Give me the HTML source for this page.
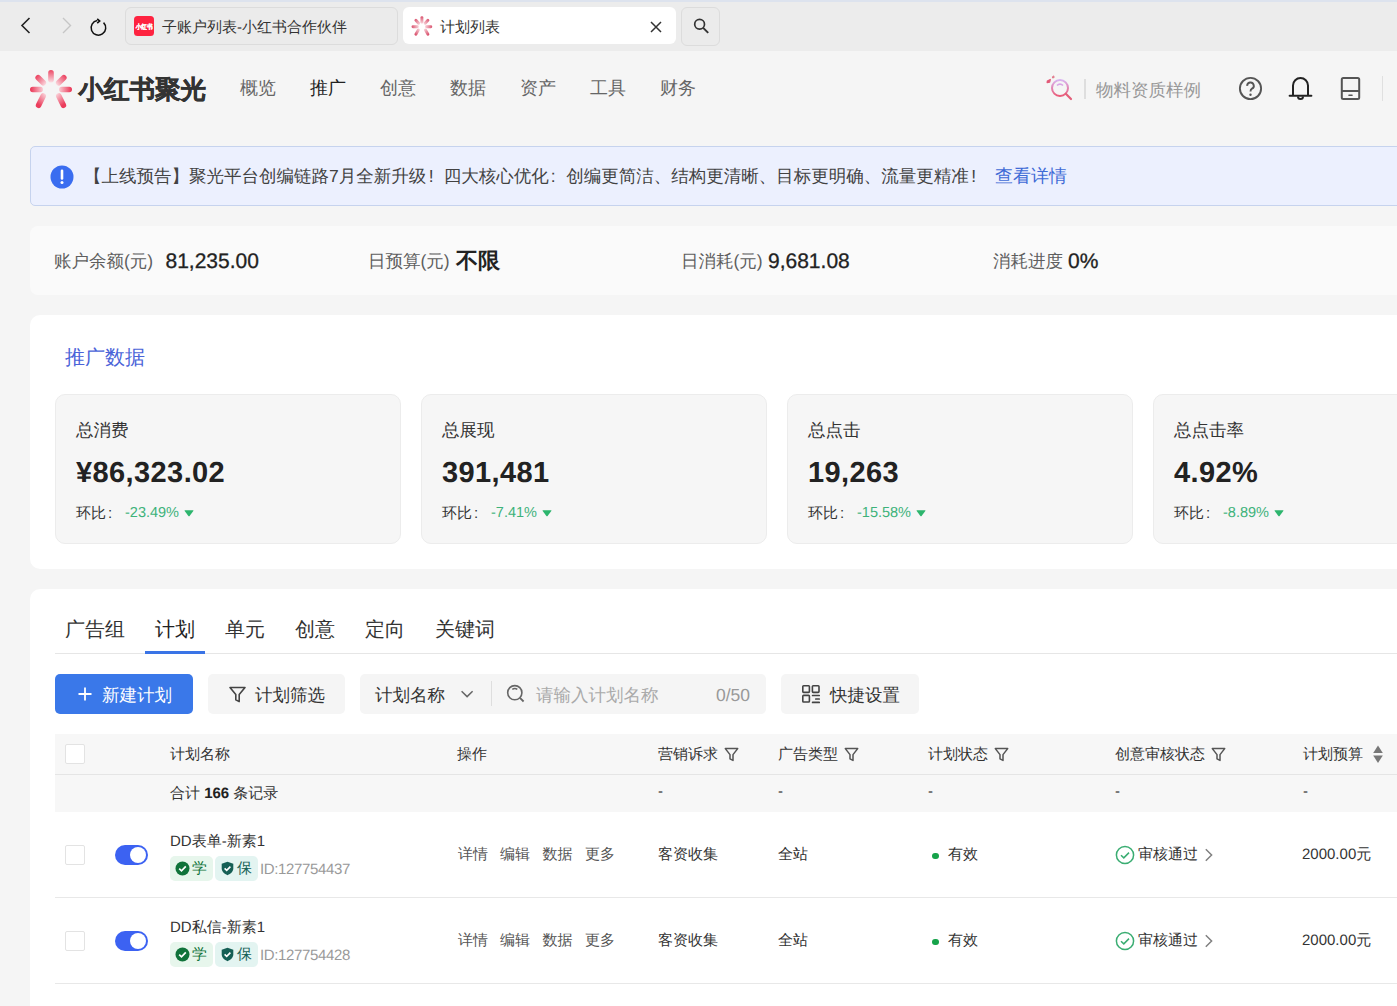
<!DOCTYPE html>
<html><head><meta charset="utf-8">
<style>
*{box-sizing:border-box;margin:0;padding:0}
html,body{width:1397px;height:1006px;overflow:hidden;background:#f5f5f5;font-family:"Liberation Sans",sans-serif;color:#333;text-rendering:geometricPrecision}
.a{position:absolute;white-space:nowrap}
#chrome{position:absolute;left:0;top:0;width:1397px;height:51px;background:#ececec;box-shadow:inset 0 2px 0 #dde3ee}
.tab{position:absolute;top:6.5px;height:38px;border-radius:6px}
.t15{font-size:15px;line-height:20px}
.t175{font-size:17.5px;line-height:24px}
.card{position:absolute;left:30px;width:1400px;background:#fff;border-radius:10px}
.kpi{position:absolute;top:79px;width:346px;height:150px;background:#f6f6f6;border:1px solid #ececec;border-radius:10px}
.kpi .l{position:absolute;left:20px;top:23px;font-size:17.5px;line-height:24px;color:#333}
.kpi .v{position:absolute;left:20px;top:60px;font-size:29px;line-height:36px;font-weight:bold;color:#222;letter-spacing:0.4px}
.kpi .h{position:absolute;left:20px;top:109px;font-size:15px;line-height:20px;color:#333}
.kpi .p{position:absolute;left:69px;top:108px;font-size:14.5px;line-height:20px;color:#3db27a}
.tri{display:inline-block;width:10px;height:8px;margin-left:5px;vertical-align:0px}
.btn{position:absolute;top:674px;height:40px;border-radius:5px;background:#f5f5f5}
.th{position:absolute;top:745px;font-size:15px;line-height:20px;color:#333}
.cb{position:absolute;width:20px;height:20px;border:1px solid #e3e3e3;border-radius:2px;background:#fff}
.row{font-size:15px;line-height:20px;color:#333}
</style></head><body>
<!-- browser chrome -->
<div id="chrome">
  <svg class="a" style="left:18px;top:16px" width="16" height="19" viewBox="0 0 16 19"><path d="M11.5 2 L4 9.5 L11.5 17" fill="none" stroke="#222" stroke-width="1.6"/></svg>
  <svg class="a" style="left:59px;top:16px" width="16" height="19" viewBox="0 0 16 19"><path d="M4 2 L11.5 9.5 L4 17" fill="none" stroke="#c6c6c6" stroke-width="1.4"/></svg>
  <svg class="a" style="left:89px;top:18px" width="19" height="19" viewBox="0 0 19 19"><path d="M14.56 4.64 A7.3 7.3 0 1 1 8.3 2.6" fill="none" stroke="#111" stroke-width="1.5"/><path d="M8.2 0.9 L10.7 3.1 L8.2 5.2" fill="none" stroke="#111" stroke-width="1.6"/></svg>
  <div class="tab" style="left:125px;width:273px;background:#ebebeb;border:1px solid #dcdcdc"></div>
  <svg class="a" style="left:134px;top:16px" width="20" height="20" viewBox="0 0 20 20"><rect x="0" y="0" width="20" height="20" rx="3.5" fill="#fe2340"/><text x="1.7" y="12.6" font-size="6.6" font-weight="bold" fill="#fff" stroke="#fff" stroke-width="0.25" textLength="17" lengthAdjust="spacingAndGlyphs">小红书</text></svg>
  <div class="a t15" style="left:162px;top:18px;color:#333">子账户列表-小红书合作伙伴</div>
  <div class="tab" style="left:403px;width:273px;background:#fff;top:7px;height:37px"></div>
  <svg class="a" style="left:411px;top:15px" width="22" height="22" viewBox="0 0 22 22">
    <defs><radialGradient id="sg" gradientUnits="userSpaceOnUse" cx="10.9" cy="11.7" r="10.5"><stop offset="0.25" stop-color="#fbe0e5"/><stop offset="1" stop-color="#d9506c"/></radialGradient></defs>
    <g stroke-linecap="round" stroke-width="2.9" stroke="url(#sg)">
      <line x1="10.9" y1="2.6" x2="10.9" y2="7.3"/>
      <line x1="4.9" y1="5.3" x2="7.6" y2="8.3"/>
      <line x1="16.9" y1="5.3" x2="14.2" y2="8.3"/>
      <line x1="2" y1="11.7" x2="6.4" y2="11.7"/>
      <line x1="15.4" y1="11.7" x2="19.8" y2="11.7"/>
      <line x1="7.4" y1="14.9" x2="4.9" y2="19.3"/>
      <line x1="14.4" y1="14.9" x2="16.9" y2="19.3"/>
    </g>
  </svg>
  <div class="a t15" style="left:440px;top:18px;color:#333">计划列表</div>
  <svg class="a" style="left:649px;top:20px" width="14" height="14" viewBox="0 0 14 14"><path d="M2 2 L12 12 M12 2 L2 12" stroke="#333" stroke-width="1.5"/></svg>
  <div class="tab" style="left:681px;width:39px;background:#ebebeb;border:1px solid #dcdcdc;top:6.5px;height:39px"></div>
  <svg class="a" style="left:691px;top:16px" width="20" height="20" viewBox="0 0 20 20"><circle cx="8.6" cy="8.3" r="4.9" fill="none" stroke="#333" stroke-width="1.7"/><path d="M12.2 11.9 L17.2 16.9" stroke="#333" stroke-width="2"/></svg>
</div>

<!-- header -->
<svg class="a" style="left:28px;top:68px" width="46" height="44" viewBox="0 0 46 44">
  <defs>
    <radialGradient id="gr" gradientUnits="userSpaceOnUse" cx="23" cy="21" r="20"><stop offset="0.3" stop-color="#fce6ea"/><stop offset="1" stop-color="#eb3d5c"/></radialGradient>
  </defs>
  <g stroke="url(#gr)" stroke-width="5.6" stroke-linecap="round">
    <line x1="23" y1="4.8" x2="23" y2="11.8"/>
    <line x1="10.2" y1="9.8" x2="15.3" y2="14.8"/>
    <line x1="35.8" y1="9.8" x2="30.7" y2="14.8"/>
    <line x1="4.8" y1="21.5" x2="12.2" y2="21.5"/>
    <line x1="33.8" y1="21.5" x2="41.2" y2="21.5"/>
    <line x1="15.2" y1="28" x2="10.6" y2="37.3"/>
    <line x1="30.8" y1="28" x2="35.4" y2="37.3"/>
  </g>
</svg>
<div class="a" style="left:78.5px;top:74px;font-size:25.5px;line-height:32px;font-weight:bold;color:#333;letter-spacing:0px;-webkit-text-stroke:0.45px #333">小红书聚光</div>
<div class="a t175" style="left:240px;top:76px;color:#666;font-size:18px">概览</div>
<div class="a t175" style="left:310px;top:76px;color:#222;font-size:18px">推广</div>
<div class="a t175" style="left:380px;top:76px;color:#666;font-size:18px">创意</div>
<div class="a t175" style="left:450px;top:76px;color:#666;font-size:18px">数据</div>
<div class="a t175" style="left:520px;top:76px;color:#666;font-size:18px">资产</div>
<div class="a t175" style="left:590px;top:76px;color:#666;font-size:18px">工具</div>
<div class="a t175" style="left:660px;top:76px;color:#666;font-size:18px">财务</div>

<svg class="a" style="left:1045px;top:74px" width="30" height="28" viewBox="0 0 30 28">
  <defs><linearGradient id="mg" x1="0" y1="0" x2="0" y2="1"><stop offset="0" stop-color="#d9b3f0"/><stop offset="1" stop-color="#ea5b78"/></linearGradient></defs>
  <circle cx="15" cy="14" r="8" fill="none" stroke="url(#mg)" stroke-width="2"/>
  <path d="M12 11.5 A4 4 0 0 1 18 11.5" fill="none" stroke="#d9a7e6" stroke-width="1.6"/>
  <path d="M20.8 19.8 L26 25" stroke="#e35f7a" stroke-width="2.2" stroke-linecap="round"/>
  <path d="M2.3 7.1 l3 -1.6 l-0.6 2.6 l-2.6 0.6z" fill="#e25a78" stroke="#e25a78" stroke-width="1.2" stroke-linejoin="round"/>
  <path d="M7.4 2.8 l1.4 -0.9 l0.3 1.7 l-1.6 0.4z" fill="#e27a8c" stroke="#e27a8c" stroke-width="1"/>
</svg>
<div class="a" style="left:1084px;top:79px;width:2px;height:20px;background:#dedede"></div>
<div class="a t175" style="left:1096px;top:78px;color:#999">物料资质样例</div>
<svg class="a" style="left:1237px;top:75px" width="27" height="27" viewBox="0 0 27 27">
  <circle cx="13.5" cy="13.5" r="10.6" fill="none" stroke="#555" stroke-width="1.9"/>
  <path d="M10.2 10.9 A3.3 3.3 0 1 1 15 13.7 C13.9 14.3 13.5 15 13.5 16.4" fill="none" stroke="#555" stroke-width="1.9"/>
  <circle cx="13.5" cy="19.8" r="1.2" fill="#555"/>
</svg>
<svg class="a" style="left:1287px;top:75px" width="27" height="27" viewBox="0 0 27 27">
  <path d="M6 20.5 V10.5 A7.5 7.5 0 0 1 21 10.5 V20.5" fill="none" stroke="#222" stroke-width="2"/>
  <path d="M2.6 20.8 H24.4" stroke="#222" stroke-width="2" stroke-linecap="round"/>
  <path d="M11 21.6 A2.5 2.5 0 0 0 16 21.6" fill="none" stroke="#222" stroke-width="2"/>
</svg>
<svg class="a" style="left:1338px;top:75px" width="25" height="27" viewBox="0 0 25 27">
  <rect x="3.8" y="3" width="17.4" height="21" rx="1.5" fill="none" stroke="#555" stroke-width="2"/>
  <path d="M3.8 16 H21.2" stroke="#555" stroke-width="2"/>
  <path d="M11 20.2 H14" stroke="#555" stroke-width="1.6" stroke-linecap="round"/>
</svg>
<div class="a" style="left:1382px;top:76px;width:1px;height:25px;background:#e0e0e0"></div>

<!-- banner -->
<div class="a" style="left:30px;top:146px;width:1400px;height:60px;background:#ecf0fe;border:1px solid #c6d3ee;border-radius:5px"></div>
<svg class="a" style="left:50px;top:165px" width="24" height="24" viewBox="0 0 24 24"><circle cx="12" cy="12" r="11.5" fill="#3a6df0"/><path d="M12 5.8 V13.5" stroke="#fff" stroke-width="2.6" stroke-linecap="round"/><circle cx="12" cy="17.6" r="1.5" fill="#fff"/></svg>
<div class="a t175" style="left:84px;top:164px;color:#424242">【上线预告】聚光平台创编链路7月全新升级<span style="display:inline-block;width:17.5px;padding-left:2.5px">!</span>四大核心优化<span style="display:inline-block;width:17.5px;padding-left:2px">:</span>创编更简洁、结构更清晰、目标更明确、流量更精准<span style="display:inline-block;width:17.5px;padding-left:2.5px">!</span></div>
<div class="a t175" style="left:995px;top:164px;color:#3f6bd6;font-size:18px">查看详情</div>

<!-- stats -->
<div class="a" style="left:30px;top:226px;width:1400px;height:69px;background:#fafafa;border-radius:8px"></div>
<div class="a t175" style="left:54px;top:249px;color:#5e5e5e">账户余额(元)</div>
<div class="a" style="left:165.5px;top:248.5px;font-size:21px;line-height:26px;color:#222;-webkit-text-stroke:0.3px #222">81,235.00</div>
<div class="a t175" style="left:368px;top:249px;color:#5e5e5e">日预算(元)</div>
<div class="a" style="left:456px;top:247px;font-size:22px;line-height:28px;color:#222;font-weight:bold">不限</div>
<div class="a t175" style="left:681px;top:249px;color:#5e5e5e">日消耗(元)</div>
<div class="a" style="left:768px;top:248.5px;font-size:21px;line-height:26px;color:#222;-webkit-text-stroke:0.3px #222">9,681.08</div>
<div class="a t175" style="left:993px;top:249px;color:#5e5e5e">消耗进度</div>
<div class="a" style="left:1068px;top:248.5px;font-size:21px;line-height:26px;color:#222;-webkit-text-stroke:0.3px #222">0%</div>

<!-- promo card -->
<div class="card" style="top:315px;height:254px">
  <div class="a" style="left:35px;top:30px;font-size:20px;line-height:26px;color:#4a63d8">推广数据</div>
  <div class="kpi" style="left:25px"><div class="l">总消费</div><div class="v">¥86,323.02</div><div class="h">环比<span style="display:inline-block;width:15px;padding-left:2px">:</span></div><div class="p">-23.49%<svg class="tri" viewBox="0 0 10 8"><path d="M1 1.2 H9 Q9.8 1.2 9.3 2 L5.6 6.9 Q5 7.6 4.4 6.9 L0.7 2 Q0.2 1.2 1 1.2Z" fill="#2db56d"/></svg></div></div>
  <div class="kpi" style="left:391px"><div class="l">总展现</div><div class="v">391,481</div><div class="h">环比<span style="display:inline-block;width:15px;padding-left:2px">:</span></div><div class="p">-7.41%<svg class="tri" viewBox="0 0 10 8"><path d="M1 1.2 H9 Q9.8 1.2 9.3 2 L5.6 6.9 Q5 7.6 4.4 6.9 L0.7 2 Q0.2 1.2 1 1.2Z" fill="#2db56d"/></svg></div></div>
  <div class="kpi" style="left:757px"><div class="l">总点击</div><div class="v">19,263</div><div class="h">环比<span style="display:inline-block;width:15px;padding-left:2px">:</span></div><div class="p">-15.58%<svg class="tri" viewBox="0 0 10 8"><path d="M1 1.2 H9 Q9.8 1.2 9.3 2 L5.6 6.9 Q5 7.6 4.4 6.9 L0.7 2 Q0.2 1.2 1 1.2Z" fill="#2db56d"/></svg></div></div>
  <div class="kpi" style="left:1123px"><div class="l">总点击率</div><div class="v">4.92%</div><div class="h">环比<span style="display:inline-block;width:15px;padding-left:2px">:</span></div><div class="p">-8.89%<svg class="tri" viewBox="0 0 10 8"><path d="M1 1.2 H9 Q9.8 1.2 9.3 2 L5.6 6.9 Q5 7.6 4.4 6.9 L0.7 2 Q0.2 1.2 1 1.2Z" fill="#2db56d"/></svg></div></div>
</div>

<!-- table card -->
<div class="card" style="top:589px;height:500px"></div>
<div class="a" style="left:65px;top:617px;font-size:20px;line-height:26px;color:#333">广告组</div>
<div class="a" style="left:155px;top:617px;font-size:20px;line-height:26px;color:#222">计划</div>
<div class="a" style="left:225px;top:617px;font-size:20px;line-height:26px;color:#333">单元</div>
<div class="a" style="left:295px;top:617px;font-size:20px;line-height:26px;color:#333">创意</div>
<div class="a" style="left:365px;top:617px;font-size:20px;line-height:26px;color:#333">定向</div>
<div class="a" style="left:435px;top:617px;font-size:20px;line-height:26px;color:#333">关键词</div>
<div class="a" style="left:55px;top:653px;width:1360px;height:1px;background:#e6e6e6"></div>
<div class="a" style="left:145px;top:651px;width:60px;height:3px;background:#3a74e6"></div>

<div class="btn" style="left:55px;width:138px;background:#3a78e9"></div>
<svg class="a" style="left:76.7px;top:686px" width="16" height="16" viewBox="0 0 16 16"><path d="M8 1.5 V14.5 M1.5 8 H14.5" stroke="#fff" stroke-width="1.8"/></svg>
<div class="a t175" style="left:102px;top:683px;color:#fff">新建计划</div>

<div class="btn" style="left:208px;width:137px"></div>
<svg class="a" style="left:228px;top:685px" width="19" height="19" viewBox="0 0 19 19"><path d="M2 2.5 H17 L11.2 9.6 V16.6 L7.8 14.8 V9.6 Z" fill="none" stroke="#444" stroke-width="1.6" stroke-linejoin="round"/></svg>
<div class="a t175" style="left:255px;top:683px;color:#333">计划筛选</div>

<div class="btn" style="left:360px;width:406px"></div>
<div class="a t175" style="left:375px;top:683px;color:#333">计划名称</div>
<svg class="a" style="left:459px;top:687px" width="16" height="13" viewBox="0 0 16 13"><path d="M2.6 4.2 L8.1 9.6 L13.6 4.2" fill="none" stroke="#666" stroke-width="1.5"/></svg>
<div class="a" style="left:491px;top:681px;width:1px;height:25px;background:#dedede"></div>
<svg class="a" style="left:505px;top:683px" width="21" height="21" viewBox="0 0 21 21"><circle cx="9.8" cy="9.7" r="7.1" fill="none" stroke="#666" stroke-width="1.6"/><path d="M7.3 6.4 Q9.8 4.4 12.3 6.4" fill="none" stroke="#666" stroke-width="1.5"/><path d="M14.9 14.8 L18.6 18.5" stroke="#666" stroke-width="1.8"/></svg>
<div class="a t175" style="left:536px;top:683px;color:#aaa">请输入计划名称</div>
<div class="a t175" style="left:716px;top:683px;color:#999">0/50</div>

<div class="btn" style="left:781px;width:138px"></div>
<svg class="a" style="left:801px;top:684px" width="20" height="20" viewBox="0 0 20 20"><rect x="1.8" y="1.8" width="6.6" height="6.6" rx="0.8" fill="none" stroke="#444" stroke-width="1.6"/><rect x="11.4" y="1.8" width="6.6" height="6.6" rx="0.8" fill="none" stroke="#444" stroke-width="1.6"/><rect x="1.8" y="11.4" width="6.6" height="6.6" rx="0.8" fill="none" stroke="#444" stroke-width="1.6"/><path d="M11.6 11.5 H18.2 M14.8 15 H18.2 M11.6 18.4 H18.2" stroke="#444" stroke-width="1.7" stroke-linecap="round"/></svg>
<div class="a t175" style="left:830px;top:683px;color:#333">快捷设置</div>

<!-- table -->
<div class="a" style="left:55px;top:734px;width:1360px;height:78px;background:#f7f7f7"></div>
<div class="a" style="left:55px;top:774px;width:1360px;height:1px;background:#e5e5e5"></div>
<div class="cb" style="left:65px;top:744px"></div>
<div class="th" style="left:170px">计划名称</div>
<div class="th" style="left:457px">操作</div>
<div class="th" style="left:658px">营销诉求</div><svg class="a" style="left:724px;top:747px" width="15" height="15" viewBox="0 0 15 15"><path d="M1.3 1.6 H13.7 L9 7.6 V13.4 L6 11.8 V7.6 Z" fill="none" stroke="#555" stroke-width="1.5" stroke-linejoin="round"/></svg>
<div class="th" style="left:778px">广告类型</div><svg class="a" style="left:844px;top:747px" width="15" height="15" viewBox="0 0 15 15"><path d="M1.3 1.6 H13.7 L9 7.6 V13.4 L6 11.8 V7.6 Z" fill="none" stroke="#555" stroke-width="1.5" stroke-linejoin="round"/></svg>
<div class="th" style="left:928px">计划状态</div><svg class="a" style="left:994px;top:747px" width="15" height="15" viewBox="0 0 15 15"><path d="M1.3 1.6 H13.7 L9 7.6 V13.4 L6 11.8 V7.6 Z" fill="none" stroke="#555" stroke-width="1.5" stroke-linejoin="round"/></svg>
<div class="th" style="left:1115px">创意审核状态</div><svg class="a" style="left:1211px;top:747px" width="15" height="15" viewBox="0 0 15 15"><path d="M1.3 1.6 H13.7 L9 7.6 V13.4 L6 11.8 V7.6 Z" fill="none" stroke="#555" stroke-width="1.5" stroke-linejoin="round"/></svg>
<div class="th" style="left:1303px">计划预算</div>
<svg class="a" style="left:1372px;top:744px" width="12" height="20" viewBox="0 0 12 20"><path d="M6 1.6 L10.8 9 H1.2 Z" fill="#777"/><path d="M6 19 L10.8 11.6 H1.2 Z" fill="#777"/></svg>
<div class="a row" style="left:170px;top:784px">合计 <b style="color:#222">166</b> 条记录</div>
<div class="a row" style="left:658px;top:782px">-</div>
<div class="a row" style="left:778px;top:782px">-</div>
<div class="a row" style="left:928px;top:782px">-</div>
<div class="a row" style="left:1115px;top:782px">-</div>
<div class="a row" style="left:1303px;top:782px">-</div>

<div class="cb" style="left:65px;top:845px"></div>
<div class="a" style="left:115px;top:845px;width:33px;height:20px;border-radius:10px;background:#3c62f2"></div>
<div class="a" style="left:129.5px;top:847px;width:16px;height:16px;border-radius:8px;background:#fff"></div>
<div class="a row" style="left:170px;top:832px;color:#333">DD表单-新素1</div>
<div class="a" style="left:170px;top:856px;width:43px;height:25px;border-radius:5px;background:#e7f6ec"></div>
<svg class="a" style="left:175px;top:861px" width="15" height="15" viewBox="0 0 15 15"><circle cx="7.5" cy="7.5" r="7" fill="#10733a"/><path d="M4.2 7.6 L6.5 9.8 L10.8 5.4" fill="none" stroke="#fff" stroke-width="1.7"/></svg>
<div class="a row" style="left:192px;top:859px;color:#10733a">学</div>
<div class="a" style="left:215px;top:856px;width:43px;height:25px;border-radius:5px;background:#e3f4f1"></div>
<svg class="a" style="left:220px;top:861px" width="15" height="15" viewBox="0 0 15 15"><path d="M7.5 0.8 L13.3 2.8 V7.3 C13.3 10.6 10.8 12.9 7.5 14.2 C4.2 12.9 1.7 10.6 1.7 7.3 V2.8 Z" fill="#155f55"/><path d="M4.6 7.4 L6.7 9.4 L10.4 5.6" fill="none" stroke="#fff" stroke-width="1.6"/></svg>
<div class="a row" style="left:237px;top:859px;color:#155f55">保</div>
<div class="a row" style="left:260px;top:860px;color:#999;letter-spacing:-0.35px">ID:127754437</div>
<div class="a row" style="left:458px;top:845px;color:#555;word-spacing:0">详情</div>
<div class="a row" style="left:500px;top:845px;color:#555">编辑</div>
<div class="a row" style="left:542.5px;top:845px;color:#555">数据</div>
<div class="a row" style="left:585px;top:845px;color:#555">更多</div>
<div class="a row" style="left:658px;top:845px;color:#333">客资收集</div>
<div class="a row" style="left:778px;top:845px;color:#333">全站</div>
<div class="a" style="left:932px;top:852.5px;width:6.5px;height:6.5px;border-radius:50%;background:#16a34a"></div>
<div class="a row" style="left:948px;top:845px;color:#333">有效</div>
<svg class="a" style="left:1115px;top:845px" width="20" height="20" viewBox="0 0 20 20"><circle cx="10" cy="10" r="8.6" fill="none" stroke="#3aad72" stroke-width="1.5"/><path d="M6 10.2 L8.8 12.9 L14 7.6" fill="none" stroke="#3aad72" stroke-width="1.5"/></svg>
<div class="a row" style="left:1138px;top:845px;color:#333">审核通过</div>
<svg class="a" style="left:1203px;top:848px" width="11" height="14" viewBox="0 0 11 14"><path d="M2.8 1.3 L8.6 7 L2.8 12.7" fill="none" stroke="#808080" stroke-width="1.5"/></svg>
<div class="a row" style="left:1302px;top:845px;color:#333">2000.00元</div>
<div class="a" style="left:55px;top:897px;width:1360px;height:1px;background:#e8e8e8"></div>


<div class="cb" style="left:65px;top:931px"></div>
<div class="a" style="left:115px;top:931px;width:33px;height:20px;border-radius:10px;background:#3c62f2"></div>
<div class="a" style="left:129.5px;top:933px;width:16px;height:16px;border-radius:8px;background:#fff"></div>
<div class="a row" style="left:170px;top:918px;color:#333">DD私信-新素1</div>
<div class="a" style="left:170px;top:942px;width:43px;height:25px;border-radius:5px;background:#e7f6ec"></div>
<svg class="a" style="left:175px;top:947px" width="15" height="15" viewBox="0 0 15 15"><circle cx="7.5" cy="7.5" r="7" fill="#10733a"/><path d="M4.2 7.6 L6.5 9.8 L10.8 5.4" fill="none" stroke="#fff" stroke-width="1.7"/></svg>
<div class="a row" style="left:192px;top:945px;color:#10733a">学</div>
<div class="a" style="left:215px;top:942px;width:43px;height:25px;border-radius:5px;background:#e3f4f1"></div>
<svg class="a" style="left:220px;top:947px" width="15" height="15" viewBox="0 0 15 15"><path d="M7.5 0.8 L13.3 2.8 V7.3 C13.3 10.6 10.8 12.9 7.5 14.2 C4.2 12.9 1.7 10.6 1.7 7.3 V2.8 Z" fill="#155f55"/><path d="M4.6 7.4 L6.7 9.4 L10.4 5.6" fill="none" stroke="#fff" stroke-width="1.6"/></svg>
<div class="a row" style="left:237px;top:945px;color:#155f55">保</div>
<div class="a row" style="left:260px;top:946px;color:#999;letter-spacing:-0.35px">ID:127754428</div>
<div class="a row" style="left:458px;top:931px;color:#555;word-spacing:0">详情</div>
<div class="a row" style="left:500px;top:931px;color:#555">编辑</div>
<div class="a row" style="left:542.5px;top:931px;color:#555">数据</div>
<div class="a row" style="left:585px;top:931px;color:#555">更多</div>
<div class="a row" style="left:658px;top:931px;color:#333">客资收集</div>
<div class="a row" style="left:778px;top:931px;color:#333">全站</div>
<div class="a" style="left:932px;top:938.5px;width:6.5px;height:6.5px;border-radius:50%;background:#16a34a"></div>
<div class="a row" style="left:948px;top:931px;color:#333">有效</div>
<svg class="a" style="left:1115px;top:931px" width="20" height="20" viewBox="0 0 20 20"><circle cx="10" cy="10" r="8.6" fill="none" stroke="#3aad72" stroke-width="1.5"/><path d="M6 10.2 L8.8 12.9 L14 7.6" fill="none" stroke="#3aad72" stroke-width="1.5"/></svg>
<div class="a row" style="left:1138px;top:931px;color:#333">审核通过</div>
<svg class="a" style="left:1203px;top:934px" width="11" height="14" viewBox="0 0 11 14"><path d="M2.8 1.3 L8.6 7 L2.8 12.7" fill="none" stroke="#808080" stroke-width="1.5"/></svg>
<div class="a row" style="left:1302px;top:931px;color:#333">2000.00元</div>
<div class="a" style="left:55px;top:983px;width:1360px;height:1px;background:#e8e8e8"></div>

</body></html>
